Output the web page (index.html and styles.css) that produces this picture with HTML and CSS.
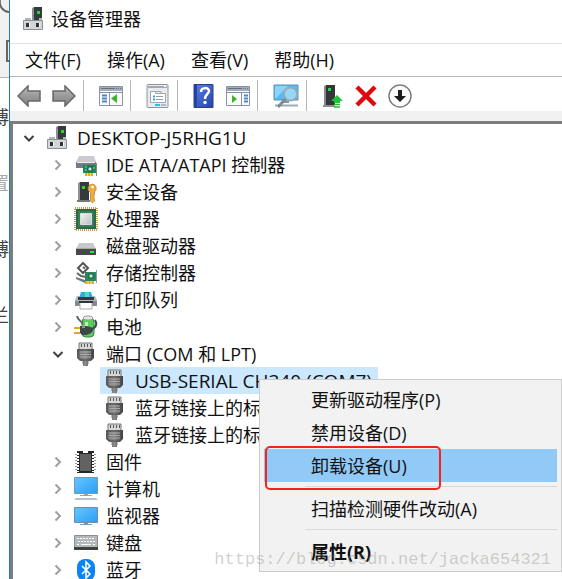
FILE: index.html
```
<!DOCTYPE html>
<html lang="zh-CN">
<head>
<meta charset="utf-8">
<title>设备管理器</title>
<link rel="stylesheet" href="styles.css">
</head>
<body>
<svg class="defs" width="0" height="0" aria-hidden="true">
  <defs>
    <linearGradient id="g-arrow" x1="0" y1="0" x2="0" y2="1"><stop offset="0" stop-color="#bdbdbd"/><stop offset=".5" stop-color="#999"/><stop offset="1" stop-color="#858585"/></linearGradient>
    <linearGradient id="g-screen" x1="0" y1="0" x2="1" y2="1"><stop offset="0" stop-color="#66c7ff"/><stop offset="1" stop-color="#2a9df4"/></linearGradient>
    <linearGradient id="g-plug" x1="0" y1="0" x2="1" y2="0"><stop offset="0" stop-color="#666"/><stop offset=".5" stop-color="#8a8a8a"/><stop offset="1" stop-color="#3c3c3c"/></linearGradient>
    <linearGradient id="g-help" x1="0" y1="0" x2="1" y2="1"><stop offset="0" stop-color="#5a80e8"/><stop offset="1" stop-color="#2644a8"/></linearGradient>
    <linearGradient id="g-die" x1="0" y1="0" x2="1" y2="1"><stop offset="0" stop-color="#f4f4f4"/><stop offset="1" stop-color="#bdbdbd"/></linearGradient>
  </defs>
  <symbol id="closed" viewBox="0 0 12 12"><path d="M3.5 1.5 8 6l-4.500 4.500" fill="none" stroke="#a0a0a0" stroke-width="2"/></symbol>
  <symbol id="open" viewBox="0 0 12 12"><path d="M1.500 4 6 8.500 10.500 4" fill="none" stroke="#404040" stroke-width="2"/></symbol>
  <symbol id="device" viewBox="0 0 24 24">
    <path d="M13 0h8v13h-8z" fill="#333b3d"/><path d="M11 1l2-1v13h-2z" fill="#8b9294"/><path d="M16 4h3v3h-3z" fill="#29d52c"/>
    <path d="M4 13v-2h6v2h8v-2h3v2" fill="#b5b8ba"/><path d="M2.500 13.500h19v9h-19z" fill="#d3d6d8" stroke="#8d9193"/><path d="M5 16h3v4H5zM15 16h3v4h-3z" fill="#333"/><path d="M8 16h1v4H8zM18 16h1v4h-1z" fill="#f7f7f7"/>
  </symbol>
  <symbol id="ide" viewBox="0 0 24 24">
    <path d="M5 3h15l2 6H2z" fill="#c9cbce"/><path d="M2 9h20v6H2z" fill="#777a80"/><path d="M3 9h18v1H3z" fill="#eee"/>
    <path d="M9 12h13v8H9z" fill="#22845b"/><path d="M22 10h1v13h-1z" fill="#888"/><path d="M14 14h4v4h-4z" fill="#cfe9d9" stroke="#105039"/><path d="M11 14h2M11 17h2M19 15h2" stroke="#8bd0ab"/><path d="M11 20h8v3h-8z" fill="#f5a51c"/><path d="M13.500 20v3M16.500 20v3" stroke="#ffdc87"/>
  </symbol>
  <symbol id="security" viewBox="0 0 24 24">
    <path d="M6 2h9v18H6z" fill="#353a3d"/><path d="M4 3l2-1v18l-2 1z" fill="#8d9294"/><path d="M8 6h3v3H8z" fill="#2ad734"/><path d="M3 20h13v2H3z" fill="#777"/>
    <path d="M18.500 4a4.500 4.500 0 0 0-2 8.500V21l2 2 2-2v-2l-1-1 1-1-1-1 1-1v-3a4.500 4.500 0 0 0-2-8z" fill="#e9ad46" stroke="#bc7f20" stroke-width=".7"/><circle cx="18.500" cy="7" r="1.300" fill="#fff"/>
  </symbol>
  <symbol id="cpu" viewBox="0 0 24 24">
    <rect x="1" y="1" width="22" height="22" fill="none" stroke="#c7a04c" stroke-width="2" stroke-dasharray="1 1"/><path d="M2 2h20v20H2z" fill="#2b6749"/><path d="M4 4h16v16H4z" fill="#397c5a"/><path d="M6.500 6.500h11v11h-11z" fill="url(#g-die)" stroke="#ddd"/>
  </symbol>
  <symbol id="disk" viewBox="0 0 24 24"><path d="M5 9h14l3 6H2z" fill="#c6c8ca"/><path d="M2 15h20v6H2z" fill="#45494c"/><path d="M2 14h20v1H2z" fill="#aaa"/><path d="M16 17h4v2h-4z" fill="#31dc3b"/></symbol>
  <symbol id="storage" viewBox="0 0 24 24">
    <path d="M11 11h11v9H11z" fill="#28875d"/><path d="M22 9h1v13h-1z" fill="#999"/><path d="M15 13h4v4h-4z" fill="#cce6d7" stroke="#165c3d"/><path d="M11 20h9v3h-9z" fill="#f5a51c"/><path d="M14 20v3M17 20v3" stroke="#ffe09a"/>
    <path d="M9 2l5 5-5 5-5-5z" fill="#fff" stroke="#555" stroke-width="2"/><path d="M9 6l2 1.500" stroke="#555" stroke-width="2"/><path d="M3 12l4 3 5 1" fill="none" stroke="#666" stroke-width="2"/><path d="M2 16l9 3v3l-9-4z" fill="#777"/>
  </symbol>
  <symbol id="printer" viewBox="0 0 24 24">
    <path d="M7 4h10l2 6H5z" fill="#39a9ed"/><path d="M11 4h4v5h-4z" fill="#56d8ba"/><path d="M3 8h3v3h12V8h3l2 4v6H1v-6z" fill="#b3b7bc"/><path d="M4 9h16v3H4z" fill="#333b44"/><path d="M1 13h22v5H1z" fill="#858a91"/><path d="M6 14h12v7H6z" fill="#fff" stroke="#aaa"/><path d="M5 13h14v2H5z" fill="#333"/>
  </symbol>
  <symbol id="battery" viewBox="0 0 24 24">
    <rect x="8" y="3" width="12" height="19" rx="4" fill="#5ccf5b" stroke="#288838"/><ellipse cx="14" cy="3" rx="5" ry="2" fill="#e8e8e8" stroke="#999"/><path d="M11 7h3v4h-3z" fill="#b5f4b1"/><path d="M3 1c1 5 4 4 6 8" fill="none" stroke="#666" stroke-width="2"/><path d="M6 11h4c5 0 9 1 9 4s-5 5-9 5H8l-2-2z" fill="#40474b"/><path d="M8 12h3" stroke="#8b9296" stroke-width="2"/><path d="M17 14c6-1 6-6 4-9" fill="none" stroke="#40474b" stroke-width="2"/><path d="M0 13h6M0 18h6" stroke="#dea82e" stroke-width="2"/>
  </symbol>
  <symbol id="port" viewBox="0 0 24 24">
    <path d="M5 1h13v7H5z" fill="#d7d7d7" stroke="#777"/><path d="M7 2h1v3H7zM10 2h1v3h-1zM13 2h1v3h-1zM16 2h1v3h-1z" fill="#555"/><path d="M3 7h17v9l-3 3h-3v5H9v-5H6l-3-3z" fill="url(#g-plug)"/><path d="M4 8h15v8l-3 2H7l-3-2z" fill="none" stroke="#4d4d4d"/><path d="M6 10h11M6 12.500h11M6 15h11" stroke="#a8a8a8"/><path d="M9 19v3M14 19v3" stroke="#777"/>
  </symbol>
  <symbol id="firmware" viewBox="0 0 24 24"><path d="M3 1h6v2h5V1h6v22H3z" fill="#272727"/><path d="M6 4h11v17H6z" fill="#626262"/><path d="M4 3v19M19 3v19" stroke="#fff" stroke-width="2" stroke-dasharray="2 1"/><path d="M2 4v18M21 4v18" stroke="#333" stroke-dasharray="1 2"/></symbol>
  <symbol id="computer" viewBox="0 0 24 24"><path d="M.5.500h23v16H.5z" fill="url(#g-screen)" stroke="#6d9bb8"/><path d="M10 17h4v1h-4zM6 18h12v1H6z" fill="#8fa6b5"/><path d="M2 21h20l2 2H0z" fill="#b6c2ca"/></symbol>
  <symbol id="monitor" viewBox="0 0 24 24"><path d="M.5 3.500h23v15H.5z" fill="url(#g-screen)" stroke="#6d8ea3"/><path d="M10 19h4v1h-4zM6 20h12v1H6z" fill="#8198a7"/></symbol>
  <symbol id="keyboard" viewBox="0 0 24 24"><path d="M.5 4.500h23v14H.5z" fill="#b3b8bb" stroke="#8a8f92"/><path d="M0 16h24v3H0z" fill="#3e4245"/><path d="M3 7.500h18M4 10.500h17M3 13.500h2M19 13.500h2" stroke="#fff" stroke-dasharray="2 1"/><path d="M7 13.500h10" stroke="#fff"/></symbol>
  <symbol id="bluetooth" viewBox="0 0 24 24"><rect x="3" y="1" width="18" height="22" rx="8" fill="#0a83f6"/><path d="M8 8l8 8-4 4V4l4 4-8 8" fill="none" stroke="#fff" stroke-width="1.600"/></symbol>
  <symbol id="win" viewBox="0 0 24 20"><path d="M.5.500h23v19H.5z" fill="#fafbfc" stroke="#8c939f"/><path d="M1 1h22v4H1z" fill="#a5acb8"/><path d="M2 2.500h14M17 2.500h1M19 2.500h1M21 2.500h1" stroke="#64718b"/><path d="M1 6.500h22" stroke="#8790a0"/></symbol>
</svg>

<div class="desktop">
  <aside class="behind" aria-hidden="true">
    <div class="behind-head">
      <svg width="9" height="77" viewBox="0 0 9 77"><path d="M0 0a10 10 0 0 0 9 12M9 41H7v20h2" fill="none" stroke="#666" stroke-width="2"/></svg>
    </div>
    <div class="frag">博</div><div class="frag faint">置</div><div class="frag">博</div><div class="frag">兰</div>
  </aside>

  <main class="window">
    <header class="title"><svg class="icon"><use href="#device"/></svg><h1>设备管理器</h1></header>
    <nav class="menubar"><button>文件(F)</button><button>操作(A)</button><button>查看(V)</button><button>帮助(H)</button></nav>
    <div class="toolbar">
      <div class="group">
        <button aria-label="后退"><svg width="24" height="22" viewBox="0 0 24 22"><path d="M11 1v5h12v10H11v5L1 11z" fill="url(#g-arrow)" stroke="#686868" stroke-width="1.500"/></svg></button>
        <button aria-label="前进"><svg width="24" height="22" viewBox="0 0 24 22"><path d="M13 1v5H1v10h12v5l10-10z" fill="url(#g-arrow)" stroke="#686868" stroke-width="1.500"/></svg></button>
      </div>
      <div class="group">
        <button aria-label="显示控制台树"><svg width="24" height="20" viewBox="0 0 24 20"><use href="#win"/><path d="M10.500 7v12" stroke="#8c939f"/><path d="M3 9.500h5M3 12.500h5M3 15.500h5" stroke="#4a87c8" stroke-width="2"/><path d="M18 8v9l-6-4.500z" fill="#3cb528"/></svg></button>
      </div>
      <div class="group">
        <button aria-label="属性"><svg width="24" height="24" viewBox="0 0 24 24"><rect x="1" y=".5" width="21" height="23" rx="1" fill="#e9ebee" stroke="#8f949c"/><path d="M2 2h19v2H2z" fill="#a3a9b3"/><path d="M18 2.500h2" stroke="#fff"/><path d="M4.500 7.500h5v2h10v9h-15z" fill="#fff" stroke="#a0a6b0"/><path d="M10 7.500h5v2" fill="none" stroke="#a0a6b0"/><path d="M7 12.500h2M7 15.500h2" stroke="#29a6df" stroke-width="2"/><path d="M10 12.500h7M10 15.500h7" stroke="#999"/><path d="M9 20h5v2H9z" fill="#26bff0"/><path d="M15 20h5v2h-5z" fill="#b5bac2"/></svg></button>
      </div>
      <div class="group">
        <button aria-label="帮助"><svg width="22" height="24" viewBox="0 0 22 24"><path d="M1 .5h19v23H1z" fill="url(#g-help)" stroke="#2b3f8b"/><path d="M1 1h3v22H1z" fill="#2343a5"/><path d="M8 8c0-5 8-5 8-1 0 3-4 3-4 8" fill="none" stroke="#fff" stroke-width="2.500"/><circle cx="12" cy="18.500" r="1.700" fill="#fff"/></svg></button>
        <button aria-label="操作窗格"><svg width="24" height="20" viewBox="0 0 24 20"><use href="#win"/><path d="M15.500 7v12" stroke="#8c939f"/><path d="M18 9.500h4M18 12.500h4M18 15.500h4" stroke="#4a87c8" stroke-width="2"/><path d="M6 9v8l5-4z" fill="#3cb528"/></svg></button>
      </div>
      <div class="group">
        <button aria-label="扫描检测硬件改动"><svg width="26" height="24" viewBox="0 0 26 24"><path d="M1 1h24v15H1z" fill="#58baf0" stroke="#5a92b4"/><path d="M2 2h13L3 14H2z" fill="#8bd5fa"/><path d="M10 17h6v2h-6z" fill="#8296a2"/><path d="M2 21.500h23" stroke="#9baeb8" stroke-width="2"/><circle cx="17.500" cy="10" r="6.500" fill="#a9def8" fill-opacity=".8" stroke="#9aabb5" stroke-width="2"/><path d="M12.500 15L5 23" stroke="#7c8a93" stroke-width="3"/></svg></button>
      </div>
      <div class="group">
        <button aria-label="更新驱动程序"><svg width="22" height="24" viewBox="0 0 22 24"><path d="M4 1h9v20H4z" fill="#343739"/><path d="M2 2l2-1v20H2z" fill="#858b8e"/><path d="M6 4h3v3H6z" fill="#22df32"/><path d="M1 21h12v2H1z" fill="#8a8f91"/><path d="M9 17l6-6 6 6h-3v2h-6v-2z" fill="#20c236"/><path d="M12 20.500h6M12 23h6" stroke="#20c236" stroke-width="1.500"/></svg></button>
        <button aria-label="卸载设备"><svg width="22" height="22" viewBox="0 0 22 22"><path d="M2 2l18 18M20 2L2 20" stroke="#df0710" stroke-width="4.500"/></svg></button>
        <button aria-label="禁用设备"><svg width="24" height="24" viewBox="0 0 24 24"><circle cx="12" cy="12" r="11" fill="#fff" stroke="#808080" stroke-width="1.500"/><path d="M10 6h4v6h4l-6 6-6-6h4z" fill="#1e1e1e"/></svg></button>
      </div>
    </div>

    <section class="pane">
      <ul class="tree">
        <li class="row root"><svg class="chev"><use href="#open"/></svg><svg class="icon"><use href="#device"/></svg><span class="latin">DESKTOP-J5RHG1U</span></li>
        <li class="row"><svg class="chev"><use href="#closed"/></svg><svg class="icon"><use href="#ide"/></svg><span>IDE ATA/ATAPI 控制器</span></li>
        <li class="row"><svg class="chev"><use href="#closed"/></svg><svg class="icon"><use href="#security"/></svg><span>安全设备</span></li>
        <li class="row"><svg class="chev"><use href="#closed"/></svg><svg class="icon"><use href="#cpu"/></svg><span>处理器</span></li>
        <li class="row"><svg class="chev"><use href="#closed"/></svg><svg class="icon"><use href="#disk"/></svg><span>磁盘驱动器</span></li>
        <li class="row"><svg class="chev"><use href="#closed"/></svg><svg class="icon"><use href="#storage"/></svg><span>存储控制器</span></li>
        <li class="row"><svg class="chev"><use href="#closed"/></svg><svg class="icon"><use href="#printer"/></svg><span>打印队列</span></li>
        <li class="row"><svg class="chev"><use href="#closed"/></svg><svg class="icon"><use href="#battery"/></svg><span>电池</span></li>
        <li class="row"><svg class="chev"><use href="#open"/></svg><svg class="icon"><use href="#port"/></svg><span>端口 (COM 和 LPT)</span></li>
        <li class="row leaf"><div class="picked"><svg class="icon"><use href="#port"/></svg><span class="latin">USB-SERIAL CH340 (COM7)</span></div></li>
        <li class="row leaf"><div><svg class="icon"><use href="#port"/></svg><span>蓝牙链接上的标</span></div></li>
        <li class="row leaf"><div><svg class="icon"><use href="#port"/></svg><span>蓝牙链接上的标</span></div></li>
        <li class="row"><svg class="chev"><use href="#closed"/></svg><svg class="icon"><use href="#firmware"/></svg><span>固件</span></li>
        <li class="row"><svg class="chev"><use href="#closed"/></svg><svg class="icon"><use href="#computer"/></svg><span>计算机</span></li>
        <li class="row"><svg class="chev"><use href="#closed"/></svg><svg class="icon"><use href="#monitor"/></svg><span>监视器</span></li>
        <li class="row"><svg class="chev"><use href="#closed"/></svg><svg class="icon"><use href="#keyboard"/></svg><span>键盘</span></li>
        <li class="row"><svg class="chev"><use href="#closed"/></svg><svg class="icon"><use href="#bluetooth"/></svg><span>蓝牙</span></li>
      </ul>
    </section>
  </main>

  <div class="context">
    <button>更新驱动程序(P)</button>
    <button>禁用设备(D)</button>
    <button class="hot">卸载设备(U)</button>
    <hr>
    <button>扫描检测硬件改动(A)</button>
    <hr>
    <button class="strong">属性(R)</button>
    <div class="mark"></div>
  </div>
  <div class="watermark">https://blog.csdn.net/jacka654321</div>
</div>
</body>
</html>
```
FILE: styles.css
```
* { box-sizing: border-box; }
body {
  margin: 0;
  background: #fff;
  color: #111;
  font: 18px/26px "Open Sans", "Noto Sans CJK SC", sans-serif;
}
button { border: 0; padding: 0; background: none; color: inherit; font: inherit; }
svg { display: block; flex: none; }
.defs { position: absolute; }
.desktop {
  position: relative;
  display: grid;
  grid-template-columns: 9px 1fr;
  height: 100vh;
  overflow: hidden;
}
.behind { overflow: hidden; background: #fff; }
.behind-head { background: #f0f0f0; border-bottom: 1px solid #b5b5b5; }
.frag {
  display: flex;
  justify-content: flex-end;
  height: 26px;
  margin: 26px 0 40px;
  color: #444;
  white-space: nowrap;
}
.faint { color: #aaa; }
.window {
  display: flex;
  flex-direction: column;
  min-width: 0;
  min-height: 0;
  border-left: 1px solid #2878c0;
}
.icon { width: 24px; height: 24px; }
.title {
  display: flex;
  align-items: center;
  gap: 6px;
  height: 44px;
  padding: 0 11px 5px;
  border-bottom: 1px solid #e3e3e3;
}
.title h1 { margin: 0; font-size: 18px; font-weight: 400; }
.menubar {
  display: flex;
  gap: 26px;
  height: 33px;
  padding: 0 15px;
  border-bottom: 1px solid #b4b9bd;
}
.toolbar {
  display: flex;
  height: 34px;
  padding: 3px 0 0 7px;
}
.group {
  display: flex;
  align-items: center;
  gap: 11px;
  padding-right: 7px;
  margin-right: 15px;
  border-right: 1px solid #b5b5b5;
}
.group:last-child { border: 0; }
.pane {
  flex: 1;
  min-height: 0;
  overflow: hidden;
  border-top: 10px solid #f0f0f0;
}
.tree {
  margin: 0;
  padding: 0;
  list-style: none;
  border: 3px solid #7d7d7d;
  border-width: 3px 0 0 3px;
}
.row {
  display: flex;
  align-items: center;
  height: 27px;
  padding-left: 39px;
  white-space: nowrap;
}
.root { padding-left: 10px; }
.chev { width: 12px; height: 12px; margin-right: 10px; }
.row .icon { margin-right: 8px; }
.latin { font-size: 19px; }
.leaf { padding-left: 87px; }
.leaf div {
  display: flex;
  align-items: center;
  height: 27px;
  padding: 0 6px 0 3px;
}
.picked { background: #cce8ff; }
.context {
  position: absolute;
  left: 259px;
  top: 379px;
  right: 0;
  display: flex;
  flex-direction: column;
  padding: 3px 4px;
  border: 1px solid #ccc;
  background: #f2f2f2;
}
.context button {
  height: 33px;
  padding-left: 47px;
  text-align: left;
}
.context .hot { background: #91c9f7; }
.context hr {
  width: calc(100% - 41px);
  height: 1px;
  margin: 4px 0 5px 41px;
  border: 0;
  background: #d9d9d9;
}
.context .strong { font-weight: 700; }
.mark {
  position: absolute;
  left: 5px;
  top: 66px;
  width: 176px;
  height: 44px;
  border: 2px solid #f5241a;
  border-radius: 5px;
}
.watermark {
  position: absolute;
  right: 11px;
  bottom: 6px;
  color: rgba(140, 140, 130, .4);
  font-family: "Liberation Mono", monospace;
  font-size: 17px;
}
```
